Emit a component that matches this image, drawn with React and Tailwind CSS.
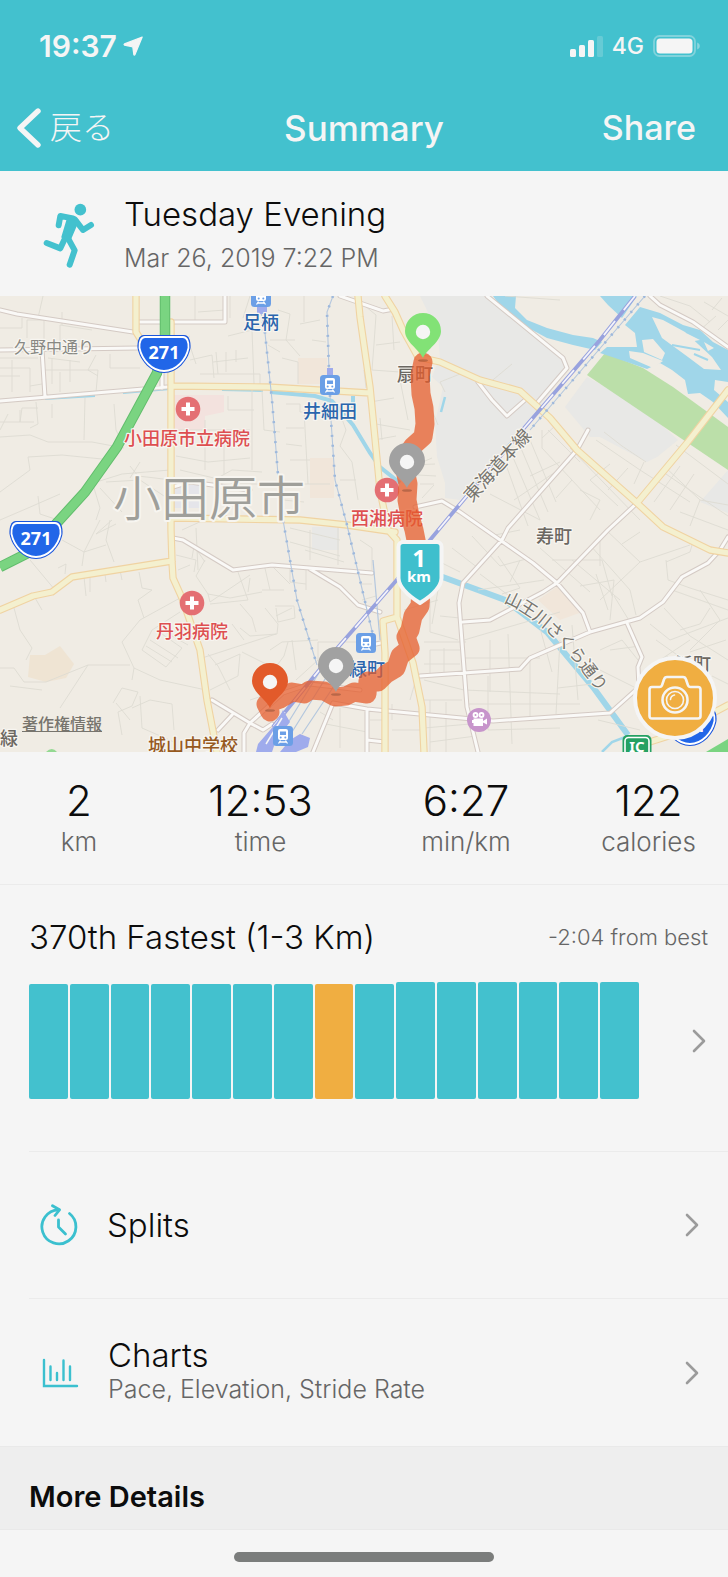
const STATS = [
  { value: '2', label: 'km' },
  { value: '12:53', label: 'time' },
  { value: '6:27', label: 'min/km' },
  { value: '122', label: 'calories' },
]

// bar heights in px, the highlighted one is the current activity
const BARS = [115, 115, 115, 115, 115, 115, 115, 115, 115, 117, 117, 117, 117, 117, 117]
const CURRENT = 7

function Chevron() {
  return (
    <svg className="w-4 h-6 shrink-0" viewBox="0 0 16 24" fill="none" stroke="#9b9b9b" strokeWidth="2.6" strokeLinecap="round" strokeLinejoin="round" aria-hidden>
      <path d="M3 2l10 10L3 22" />
    </svg>
  )
}

function StatusBar() {
  return (
    <div className="h-[91px] pl-[39px] pr-7 flex items-center justify-between">
      <div className="flex items-center gap-[6px]">
        <span className="text-[30px] leading-9 font-semibold">19:37</span>
        <svg className="w-5 h-5" viewBox="0 0 20 20" fill="currentColor" stroke="currentColor" strokeWidth="1.2" strokeLinejoin="round" aria-hidden>
          <path d="M19.2 1L12 18.600Q11.300 19.600 10.800 18.400L9.800 10.800 1.600 9.200Q.5 8.600 1.500 7.900z" />
        </svg>
      </div>
      <div className="flex items-center gap-[9px]">
        <svg className="w-[33px] h-[22px]" viewBox="0 0 33 22" fill="currentColor" aria-hidden>
          <rect x="0" y="14" width="6" height="8" rx="1.5" />
          <rect x="9" y="10" width="6" height="12" rx="1.5" />
          <rect x="18" y="5" width="6" height="17" rx="1.5" />
          <rect x="27" y="1" width="6" height="21" rx="1.5" opacity=".2" />
        </svg>
        <span className="text-[23px] leading-8 font-medium">4G</span>
        <svg className="w-[47px] h-[22px]" viewBox="0 0 47 22" fill="currentColor" aria-hidden>
          <rect x="1" y="1" width="41" height="20" rx="5.5" fill="none" stroke="currentColor" strokeWidth="1.8" opacity=".35" />
          <rect x="3.5" y="3.500" width="36" height="15" rx="3.5" />
          <path d="M44.2 7.500c1.800.8 2.600 2 2.600 3.500s-.8 2.700-2.600 3.500z" opacity=".4" />
        </svg>
      </div>
    </div>
  )
}

function NavBar() {
  return (
    <nav className="h-[74px] px-4 grid grid-cols-[1fr_auto_1fr] items-center">
      <button className="flex items-center gap-2 justify-self-start">
        <svg className="w-[26px] h-[42px]" viewBox="0 0 26 42" fill="none" stroke="currentColor" strokeWidth="5.4" strokeLinecap="round" strokeLinejoin="round" aria-hidden>
          <path d="M22 4L4 21l18 17" />
        </svg>
        <span className="text-[32px] leading-10 font-light">戻る</span>
      </button>
      <h1 className="text-[35px] leading-10 font-medium">Summary</h1>
      <button className="justify-self-end pr-4 text-[34px] leading-10 font-medium">Share</button>
    </nav>
  )
}

function Runner() {
  return (
    <svg className="w-[52px] h-[66px] shrink-0" viewBox="130 548 156 198" fill="none" stroke="#43c1ce" strokeWidth="18" strokeLinecap="round" strokeLinejoin="round" aria-hidden>
      <circle cx="242" cy="568" r="17.5" fill="#43c1ce" stroke="none" />
      <path d="M177 615l5-28 38 7" />
      <path d="M226 598l24 31 24-15" />
      <path d="M206 590l29 11-25 58-22-9z" fill="#43c1ce" strokeWidth="6" />
      <path d="M199 648l-17 36-41-16" />
      <path d="M204 652l21 38-15 43" />
    </svg>
  )
}

function Pin({ x, y, color }) {
  return (
    <g transform={`translate(${x} ${y})`}>
      <ellipse cx="0" cy="2.5" rx="5" ry="1.3" fill="#000" opacity=".2" />
      <path d="M0 0C-4-9-18-16-18-27a18 18 0 0 1 36 0C18-16 4-9 0 0z" fill={color} />
      <circle cx="0" cy="-26" r="7.2" fill="#f5f5f5" />
    </g>
  )
}

function RouteShield({ x, y }) {
  return (
    <g transform={`translate(${x} ${y})`}>
      <path d="M-20-19H20C25-19 27-13 26.500-6 24 7 13 19 0 19S-24 7-26.500-6C-27-13-25-19-20-19z" fill="#1a55dc" />
      <path d="M-19-17H19C23-17 25-12 24.500-6 22 6 12 17 0 17S-22 6-24.500-6C-25-12-23-17-19-17z" fill="#2166e8" stroke="#fff" strokeWidth="1.8" />
      <text x="0" y="5" textAnchor="middle" fontSize="18" fontWeight="700" fill="#fff" fontFamily="Noto Sans, sans-serif">271</text>
    </g>
  )
}

function Hospital({ x, y }) {
  return (
    <g transform={`translate(${x} ${y})`}>
      <circle r="12.3" fill="#e46f73" />
      <path d="M-6.500 0H6.500M0-6.500V6.500" stroke="#fff" strokeWidth="4" />
    </g>
  )
}

function Station({ x, y }) {
  return (
    <g transform={`translate(${x} ${y})`}>
      <rect x="-10" y="-10" width="20" height="20" rx="3.5" fill="#6b9fe6" />
      <path d="M-3-7H3a2 2 0 0 1 2 2V2a2 2 0 0 1-2 2H-3A2 2 0 0 1-5 2V-5A2 2 0 0 1-3-7z" fill="#fff" />
      <rect x="-3" y="-4.5" width="6" height="3.5" fill="#6b9fe6" />
      <circle cx="-2.3" cy="1.5" r="1" fill="#6b9fe6" />
      <circle cx="2.3" cy="1.5" r="1" fill="#6b9fe6" />
      <path d="M-2.500 4.500l-2 3M2.500 4.500l2 3M-3 6H3" stroke="#fff" strokeWidth="1.3" />
    </g>
  )
}

function Label({ x, y, size = 18, color, weight = 500, children, ...rest }) {
  return (
    <text
      x={x}
      y={y + size * 0.38}
      textAnchor="middle"
      fontSize={size}
      fontWeight={weight}
      fill={color}
      stroke="#f7f5f0"
      strokeWidth="2.5"
      strokeLinejoin="round"
      paintOrder="stroke"
      {...rest}
    >
      {children}
    </text>
  )
}

const MINOR = [
  'M43 296L38 318M0 328H22V318M27 338V320H44V345M60 348V325L92 330M62 325V312M0 358H38M0 368H30V392M12 360V392M30 386L42 384',
  'M48 358L80 362M44 370H98L96 392M52 358V384M70 360V382M96 355L88 370L98 376M110 354V368H140M60 392V372M0 376H20',
  'M195 296V320M198 312L225 310M230 318V296M250 296L243 318M228 336L252 330H266M190 336L178 345M190 360L212 355L214 378',
  'M178 350L190 346L196 364M216 352L218 374M226 352V372M236 362V350M213 362L248 358M200 374H260V384M252 330L254 384',
  'M278 310L290 314L286 340L300 356M270 340H295M300 324L320 320M282 358L298 362V384M304 296V322M268 345L280 352M312 340L326 342',
  'M0 422H20L22 408H38M20 410V422H34M36 402L38 424L30 428M85 398L84 440M114 404L116 430L122 442M8 414L0 430M52 404V418',
  'M0 437L30 435L48 442H92L124 448M28 457L62 455L112 460M28 457L30 470L0 492M130 466L138 476L172 480M130 478L140 462',
  'M0 520L28 508L60 494M38 496L40 514L58 520M90 484L122 474L170 470M94 488L100 508L96 520M100 488L122 512M106 482L140 480L170 500',
  'M100 520L84 552L62 540M84 552L82 566M84 552L106 545M112 520L96 534L116 524M110 520L106 540L114 562M30 560L55 590M58 568L66 564L65 574',
  'M176 430H250M176 456L208 462L250 458M252 388L252 470M214 480L232 470L262 472M228 396V410H254M205 420V470M224 430V474M180 470L214 478L236 484H278M262 390L264 430L280 432',
  'M286 404L300 404V412H318M304 410L308 484M286 428H304M286 444L302 446M290 460H310M280 484H330M283 500L304 502M338 408L346 430L340 446L352 462L358 500M340 480H356',
  'M182 530L204 520M196 528L198 570M176 555L196 560L194 572M205 560L196 576L208 594L210 602L250 575M290 528L340 540M290 542L340 556M305 550L344 562M310 530V560M338 525V565',
  'M238 572L248 600L210 604M208 594L230 598L262 592M250 578L248 592M262 590H284M264 564L270 590M272 566L290 584M290 564V582L306 584M306 570V590M275 606H294L295 618L278 622L276 608M276 616L292 608',
  'M265 608L278 624L277 634L250 636L240 628M240 604L252 618L256 632M232 624L244 640M202 658L276 634M270 650L282 642L318 640M208 654L218 666L230 690M288 642L284 656L272 672',
  'M139 572L142 588L152 590L138 600L144 618M180 598L140 620L122 642L134 668L160 680L206 690M180 612L152 630L142 650L166 667L182 648L162 634M158 628L188 645M150 640L178 658M146 646L172 662',
  'M14 608L20 630L32 648L26 660M0 668H14L24 682H46M46 682L88 665H130M88 665L60 708M134 668L132 680M113 703L122 688L138 692L132 706L118 712L122 735M132 708L150 700L172 704L174 730',
  'M140 696L142 728L174 742M116 703L130 720M215 665L240 654L238 676L210 690M242 652L270 666M292 640L296 670M250 700L274 692M318 642H360M318 642V660L296 680M340 642V655',
  'M84 577L86 596M90 578V592M105 574L106 582M120 570L122 580M34 596L42 610M178 570L190 565M192 558L194 546L205 562M42 690L10 686',
  'M365 306L376 315L374 344L372 370L400 372M376 345L400 342M392 316L394 350M364 370L366 388M370 402L394 398M376 424L410 430M374 440L396 436M408 420L400 380M380 418L382 440M412 465L435 464M418 475L436 476',
  'M445 392L440 382L460 374M488 384L512 364M420 484H434M422 498L434 485M418 464L432 458M432 410L438 425',
  'M542 430V448L600 510M530 440L556 502M520 446L548 512M512 455L540 520M505 462L528 526M548 430L580 462M556 425L542 438M530 476L560 462M514 500L570 462M490 494L540 520M572 480L556 498M596 440L640 470L690 502M570 448L640 520',
  'M610 464L590 480L618 506M628 468L608 490M644 462L634 484M664 466L700 500L728 505M676 445L728 484M660 470L728 516M680 466L654 502M694 474L670 510M700 500L690 526M680 512L728 530M590 520L600 500L580 490M604 432L622 446L646 462',
  'M452 548L478 568M472 536L500 566L530 558M440 562L460 572M490 536L520 530M498 556L520 588L502 594M478 590L544 580M480 574L520 604M520 560L510 582M540 548L590 592M552 560L602 560L612 596',
  'M606 530L640 562L600 600M590 545L630 590L636 615M572 560L620 600M580 586L614 580L610 620M614 596L630 622M596 574L608 610M600 566V540M622 544L640 532M640 562L690 545M666 560L668 580L690 588L728 600M666 562L690 552L692 545',
  'M464 640L560 612M464 658H540M464 690L560 694M490 640V692M508 634L512 744M488 676V730L560 728M530 658V716M560 640L556 714M466 704H580M540 628L552 672M572 625L578 700M592 684L558 688M600 650L622 640L638 660',
  'M650 624L670 640L728 618M664 608L690 636L728 660M680 630L700 624L710 608M700 590L720 620L690 650M656 640L690 664M660 660L690 640M672 590L728 610M690 652L726 640M600 670L640 690M610 650L640 646M598 720L640 730M650 666L668 656M712 676L728 684',
  'M430 600V632L458 640M404 610L438 600M438 590L432 624M440 616L460 618M424 642H466M430 650H460M424 664H460M430 650V675M444 648V672M424 680L464 690M422 700H462M430 700V752M446 702V752M424 728L470 724M430 742L476 736',
  'M362 668L384 665M370 720H384M320 712L333 720M326 724L367 732M340 708V748M410 700L418 672M392 704V720M392 730H420M360 584H372M362 600L376 596M360 540L372 548V570M404 548V590M404 560H396',
  'M505 296L560 300M660 296L690 306L710 322M704 302L728 316M712 310L722 298M700 330L716 316M718 330L728 320',
].join('')

const WHITE = [
  'M0 310L17 314L133 332',
  'M138 322H225V296',
  'M0 350L138 348M42 350L45 397M0 401L167 387M162 370V388',
  'M487 296L563 358L567 368L537 403',
  'M478 382L492 400L507 416L525 400',
  'M340 296L360 303L383 311L394 309',
  'M650 296L660 305L693 322L728 347',
  'M415 507L442 501L460 512L533 563L557 583L583 613L590 632',
  'M588 430L577 450L508 528L502 540L463 583L459 603L467 707L478 752',
  'M637 503L608 530L557 583L543 592L490 620L463 622',
  'M420 676L520 669L530 658L590 632L640 618L663 602L682 577L708 563L720 550L728 537',
  'M627 623L642 657L638 667L639 687L610 713L493 721L367 709L333 703',
  'M367 709V752M367 740L385 742',
  'M173 538L183 540L233 570L272 565L372 573',
  'M310 569L340 587L358 605L380 612',
  'M212 700L250 723L263 730L272 724M232 715L218 730M250 723L244 733V752',
  'M250 723L283 693L310 684L360 690M333 703L313 752',
  'M173 487L190 482L250 490M367 646L385 642',
].join('')

const YELLOW = [
  'M136 296V332L144 345M171 322V530L172 562L173 578L182 598L200 650L207 700L217 752',
  'M171 386L267 387L370 393',
  'M0 610L33 596L52 592L72 577L172 561',
  'M172 518L300 520L347 525L395 532',
  'M358 296L360 317L370 387L380 490L388 530L397 540V617L383 621L385 653V752',
  'M397 617L413 663L422 707L424 752',
  'M385 296L395 312L403 330L418 357L440 362L480 380L520 391L550 418L577 450L637 503L663 527L710 550L728 553',
  'M637 503L687 443L728 390',
  'M640 745L675 734L713 713L728 705',
].join('')

const HIGHWAY = 'M165 290V337L157 373L117 447L85 492L55 525L30 552L0 567'

const RAIL = 'M635 296L600 340L525 427L450 516L395 582L333 653L273 727'
const RAIL_THIN =
  'M261 312L265 333L272 400L278 475L283 520L297 600L317 665M333 296L327 312L329 370L331 420L335 480L347 525L367 610L373 635M645 296L530 430'

const ROUTE =
  'M423 362L420 376L421 394L424 408L425 424L423 437L413 446L406 456L405 470L408 484L407 500L410 516L414 530L418 550L421 590L420 606L413 616L410 630L406 637L410 648L400 656L396 668L386 674L378 682L368 681L367 694L354 692L346 696L335 697L324 691L310 690L304 694L292 692L280 699L266 704L270 712'

function RouteMap() {
  return (
    <svg className="block w-full" viewBox="0 296 728 456" role="img" aria-label="Route map">
      <rect x="0" y="296" width="728" height="456" fill="#f0ece4" />

      {/* land use */}
      <g>
        <path d="M420 296H487L563 358L567 370L525 425L460 500L445 498V483L437 457L435 423L443 387L432 377L440 357L438 333z" fill="#e8e8e6" />
        <path d="M587 377L565 407L590 437H600L647 462L657 457L678 440L640 405z" fill="#e8e8e6" />
        <path d="M728 470L700 502L728 513zM312 527H339V550H312z" fill="#e8e8e6" />
        <path d="M174 395H224V412L205 416V430H174z" fill="#f3e2de" />
        <path d="M298 358H327V384H298zM310 458H334V498H310z" fill="#f1e6da" />
        <path d="M30 655L45 655L60 646L74 664L66 678L46 682L28 677z" fill="#efe4d3" />
        <path d="M538 600L558 586L582 612L560 620z" fill="#f1e6da" />
        <path d="M174 485H205V508H174z" fill="#e5e5ea" />
        <path d="M605 353L587 375L728 470V427L713 416L673 387L643 368z" fill="#bbdfa9" />
      </g>

      {/* water */}
      <g fill="#a0d6e9">
        <path d="M493 296H516L515 308L527 320L547 328L573 335L593 338L602 342L595 350L573 345L547 338L523 325L503 310z" />
        <path d="M600 296H637L622 318L608 305z" />
        <path d="M640 307L660 313L683 325L700 330L713 342L728 350V382L715 380L714 390L728 402V418L713 402L700 393L688 394L685 380L672 370L660 363L647 369L627 362L600 353L607 347L637 347L635 333L625 325z" />
      </g>
      <path d="M642 340L653 339L665 353L662 360L644 352zM629 351L643 353L663 361L653 368L630 358zM652 317L663 320L685 332L712 357L721 370L704 369L688 357L662 338zM686 333L700 340L689 342zM704 342L714 348L708 351z" fill="#f0ece4" />
      <path d="M672 345L700 350M694 354L708 360" stroke="#a0d6e9" strokeWidth="2" />
      <g fill="none" stroke="#a0d6e9">
        <path d="M45 399L95 396M123 393L170 389M222 390L263 391" strokeWidth="2" />
        <path d="M270 392L315 396L332 401L353 425L370 453L380 467L400 483M353 396V408" strokeWidth="4" />
        <path d="M440 576L505 600L547 632L593 687L628 735" strokeWidth="6" />
        <path d="M602 752L612 742L628 736M441 412L445 397" strokeWidth="2.5" />
      </g>

      <path d={MINOR} fill="none" stroke="#dedbd3" strokeWidth=".9" />

      <g fill="none" strokeLinejoin="round" strokeLinecap="round">
        <path d={WHITE} stroke="#d4cac4" strokeWidth="5" />
        <path d={WHITE} stroke="#faf9f7" strokeWidth="3" />
        <path d={YELLOW} stroke="#f0d3a2" strokeWidth="7.4" />
        <path d={YELLOW} stroke="#f4f0cf" strokeWidth="5.2" />
      </g>

      {/* railways */}
      <g fill="none">
        <path d={RAIL_THIN} stroke="#b4c7de" strokeWidth="1.1" />
        <path d={RAIL_THIN} stroke="#9db8dc" strokeWidth="2.6" strokeDasharray="2 8" />
        <path d="M322 668L286 726M332 668L292 732M346 668L302 734M373 560L380 640" stroke="#b4c7de" strokeWidth="1.2" />
        <path d={RAIL} stroke="#98a2de" strokeWidth="3.8" />
        <path d={RAIL} stroke="#f4f3fa" strokeWidth="1.8" strokeDasharray="18 14" />
        <path d="M257 305H267V314H257zM327 368H333V376H327z" fill="#9fabec" />
      </g>
      <path d="M283 710L290 722L276 740L272 752H256L258 744L277 722zM290 740L300 734L310 738L308 747L296 752H280z" fill="#9fabec" />
      <path d="M266 744L282 718" stroke="#f5f5f5" strokeWidth="1.5" />

      <path d={HIGHWAY} fill="none" stroke="#62bd6c" strokeWidth="10.5" />
      <path d={HIGHWAY} fill="none" stroke="#7ad481" strokeWidth="8.5" />
      <path d="M706 752L728 739V752z" fill="#7ad481" />
      <path d="M46 752Q52 746 57 752z" fill="#94d992" />

      <Label x={209} y={498} size={48} color="#9f9f9a" weight={350} strokeWidth="4">小田原市</Label>
      <Label x={54} y={347} size={16} color="#888883" weight={400}>久野中通り</Label>
      <Label x={261} y={322} color="#2a65ad">足柄</Label>
      <Label x={330} y={411} color="#2a65ad">井細田</Label>
      <Label x={187} y={438} color="#de4f50">小田原市立病院</Label>
      <Label x={192} y={631} color="#de4f50">丹羽病院</Label>
      <Label x={387} y={518} color="#de4f50">西湘病院</Label>
      <Label x={415} y={374} color="#6b6761">扇町</Label>
      <Label x={367} y={669} color="#2a65ad">緑町</Label>
      <Label x={554} y={536} color="#6b6761">寿町</Label>
      <Label x={693} y={664} color="#6b6761">浜町</Label>
      <Label x={9} y={738} color="#6b6761">緑</Label>
      <Label x={193} y={745} color="#96591f">城山中学校</Label>
      <g transform="translate(497 465) rotate(-48)">
        <Label x={0} y={0} size={18} color="#77756f" weight={400}>東海道本線</Label>
      </g>
      <path id="river" d="M506 597C542 612 575 645 616 708" fill="none" />
      <text fontSize="17" fontWeight="400" fill="#77756f" stroke="#f7f5f0" strokeWidth="2.5" paintOrder="stroke" dy="6">
        <textPath href="#river">山王川さくら通り</textPath>
      </text>

      <Hospital x={188} y={409} />
      <Hospital x={192} y={603} />
      <Hospital x={387} y={490} />
      <Station x={261} y={297} />
      <Station x={330} y={385} />
      <Station x={366} y={643} />
      <Station x={283} y={736} />
      <RouteShield x={164} y={354} />
      <RouteShield x={36} y={540} />
      <RouteShield x={690} y={727} />

      <g transform="translate(479 720)">
        <circle r="12" fill="#c795cb" />
        <circle cx="-3.5" cy="-5" r="2.9" fill="#fff" />
        <circle cx="2.5" cy="-5" r="2.9" fill="#fff" />
        <circle cx="-3.5" cy="-5" r="1" fill="#c795cb" />
        <circle cx="2.5" cy="-5" r="1" fill="#c795cb" />
        <path d="M-5.500-1.500H4V1L8-1.500V4.500L4 2.500V6H-5.500V3H-7V0H-5.500z" fill="#fff" />
      </g>

      <g transform="translate(637 735)">
        <rect x="-14.5" y="0" width="29" height="26" rx="5" fill="#25a163" />
        <rect x="-12" y="2.5" width="24" height="26" rx="3.5" fill="#25a163" stroke="#fff" strokeWidth="1.6" />
        <text x="0" y="17" textAnchor="middle" fontSize="15" fontWeight="700" fill="#fff" fontFamily="Noto Sans, sans-serif">IC</text>
      </g>

      <path d={ROUTE} fill="none" stroke="#e55c2b" strokeWidth="19" strokeLinecap="round" strokeLinejoin="round" opacity=".74" />

      <Pin x={423} y={358} color="#82e276" />
      <Pin x={407} y={488} color="#a1a1a1" />
      <Pin x={336} y={692} color="#a1a1a1" />
      <Pin x={270} y={708} color="#e25a2a" />

      <g fontFamily="Noto Sans, sans-serif" fontWeight="700" textAnchor="middle">
        <path d="M403 542H437a4.500 4.500 0 0 1 4.500 4.500V578Q441 590 420 603Q399 590 398.500 578V546.500A4.500 4.500 0 0 1 403 542z" fill="#3fbfcd" stroke="#f5f5f5" strokeWidth="4" />
        <text x="419" y="567" fontSize="24" fill="#fff">1</text>
        <text x="419" y="582" fontSize="15" fill="#fff">km</text>
      </g>
    </svg>
  )
}

function CameraButton() {
  return (
    <button aria-label="Add photo" className="absolute right-[11px] bottom-3 w-[84px] h-[84px] rounded-full bg-[#f0ae41] border-4 border-[#f5f5f5] flex items-center justify-center">
      <svg className="w-[56px] h-[48px] shrink-0" viewBox="0 0 56 48" fill="none" stroke="#f5f5f5" strokeWidth="2.6" strokeLinejoin="round" strokeLinecap="round" aria-hidden>
        <path d="M5 13h7.500q2 0 2.600-2l1.900-5.500Q17.700 3 20 3h16q2.300 0 3 2.500l1.900 5.500q.6 2 2.600 2H51q2.500 0 2.500 2.500V42q0 2.500-2.500 2.500H5Q2.500 44.500 2.500 42V15.500Q2.500 13 5 13z" />
        <circle cx="28" cy="26" r="12.5" />
        <circle cx="28" cy="26" r="8.5" strokeWidth="1.6" />
        <path d="M23.500 25.500a5 5 0 0 1 4-4.500" strokeWidth="1.6" />
      </svg>
    </button>
  )
}

function SplitsIcon() {
  return (
    <svg className="w-10 h-[42px] shrink-0" viewBox="0 0 40 42" fill="none" stroke="#3bc0cf" strokeWidth="2.8" strokeLinecap="round" strokeLinejoin="round" aria-hidden>
      <path d="M30.500 9.500A17 17 0 1 1 19.500 5.800" />
      <path d="M13.500 1.800l7 4-4.500 5.700" />
      <path d="M19.500 16v7l7 7" />
    </svg>
  )
}

function ChartsIcon() {
  return (
    <svg className="w-10 h-[30px] shrink-0" viewBox="0 0 40 30" fill="none" stroke="#3bc0cf" strokeWidth="2.4" strokeLinecap="round" aria-hidden>
      <path d="M5 2v26h33M11.500 8.500V22M18 15v7M24.500 2.500V22M31 8.500V22" />
    </svg>
  )
}

export default function App() {
  return (
    <div className="min-h-screen bg-[#f5f5f5] text-[#0c0c0c] font-['Inter','Noto_Sans_CJK_JP',sans-serif]">
      <header className="bg-[#43c1ce] text-[#f5f5f5] pb-[6px]">
        <StatusBar />
        <NavBar />
      </header>

      <section className="pl-[43px] pt-[21px] pb-4 flex items-center gap-[29px]">
        <Runner />
        <div>
          <h2 className="text-[33px] leading-[44px] font-light">Tuesday Evening</h2>
          <p className="text-[25px] leading-[44px] font-light text-[#666]">Mar 26, 2019 7:22 PM</p>
        </div>
      </section>

      <section className="relative">
        <RouteMap />
        <a href="#" className="absolute left-[22px] bottom-[18px] text-[16px] leading-5 font-medium text-[#77746d] underline">著作権情報</a>
        <CameraButton />
      </section>

      <dl className="pt-6 pb-[26px] grid grid-cols-[158fr_205fr_206fr_159fr] text-center border-b border-[#ebebeb]">
        {STATS.map((s) => (
          <div key={s.label} className="flex flex-col-reverse">
            <dt className="text-[26px] leading-8 font-light text-[#666]">{s.label}</dt>
            <dd className="text-[42px] leading-[50px] font-light">{s.value}</dd>
          </div>
        ))}
      </dl>

      <section className="pt-8 pl-[29px]">
        <div className="flex items-center justify-between pr-5">
          <h2 className="text-[33px] leading-10 font-light">370th Fastest (1-3 Km)</h2>
          <p className="text-[22px] leading-10 font-light text-[#666]">-2:04 from best</p>
        </div>
        <button aria-label="Compare activities" className="mt-[25px] pb-[52px] pr-[21px] w-full flex items-center gap-[52px] border-b border-[#ebebeb]">
          <span className="flex-1 h-[117px] flex items-end gap-[2px]">
            {BARS.map((h, i) => (
              <span
                key={i}
                className={`flex-1 rounded-[2px] ${i === CURRENT ? 'bg-[#f0ae41]' : 'bg-[#43c1ce]'}`}
                style={{ height: h }}
              />
            ))}
          </span>
          <Chevron />
        </button>
      </section>

      <section className="pl-[29px]">
        <button className="w-full h-[147px] pl-[10px] pr-7 flex items-center gap-7 text-left border-b border-[#ebebeb]">
          <SplitsIcon />
          <span className="flex-1 text-[33px] leading-10 font-light">Splits</span>
          <Chevron />
        </button>
        <button className="w-full h-[147px] pl-[10px] pr-7 flex items-center gap-[29px] text-left">
          <ChartsIcon />
          <span className="flex-1 pb-2 flex flex-col">
            <span className="text-[33px] leading-10 font-light">Charts</span>
            <span className="text-[25px] leading-7 font-light text-[#666]">Pace, Elevation, Stride Rate</span>
          </span>
          <Chevron />
        </button>
      </section>

      <section className="bg-[#eee] border-y border-[#e9e9e9] px-[29px] pt-[30px] pb-3">
        <h2 className="text-[29px] leading-10 font-semibold">More Details</h2>
      </section>
      <div className="h-12 pt-[22px] flex justify-center">
        <div className="w-[260px] h-[10px] rounded-full bg-[#7b7d7c]" />
      </div>
    </div>
  )
}
